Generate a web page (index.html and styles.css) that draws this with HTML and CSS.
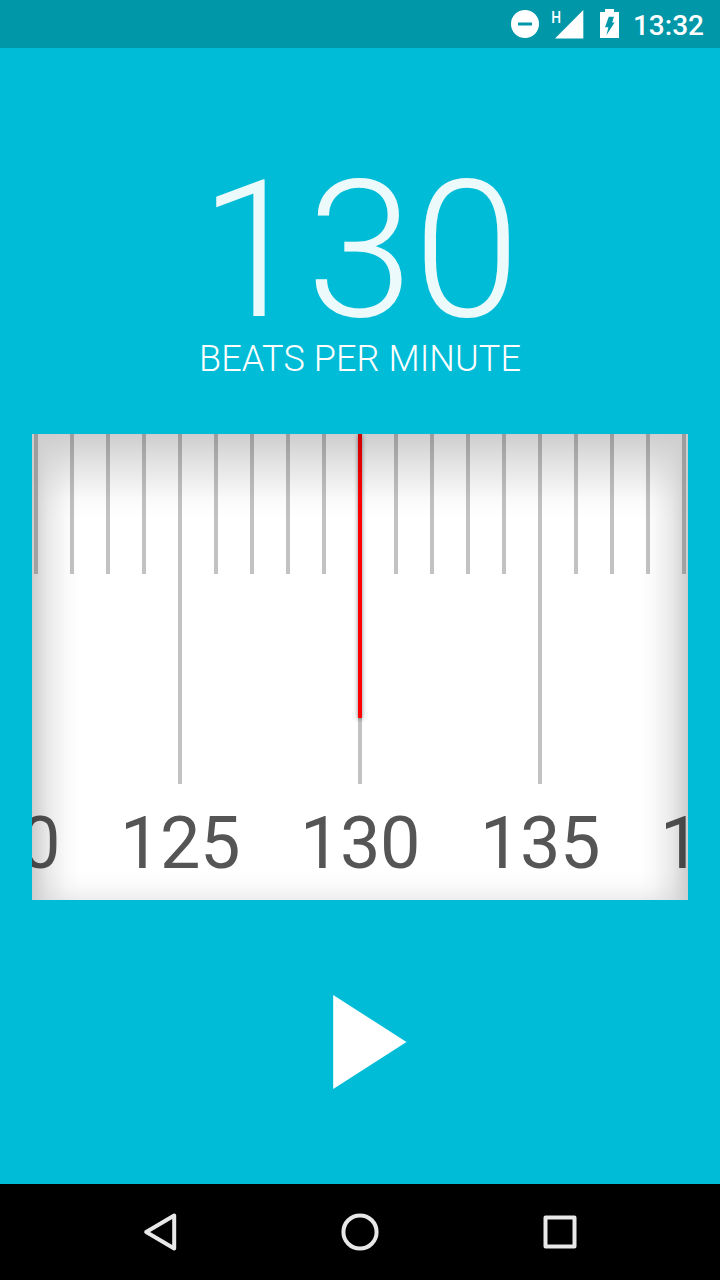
FILE: index.html
```html
<!DOCTYPE html>
<html lang="en">
<head>
    <meta charset="UTF-8">
    <meta name="viewport" content="width=device-width, initial-scale=1.0">
    <title>Metronome</title>
    <link rel="stylesheet" href="styles.css">
</head>
<body>
    <div class="screen">
        <header class="status-bar">
            <svg class="status-icons" width="112" height="48" viewBox="510 0 112 48">
                <path fill="#fff" fill-rule="evenodd" d="M525 10a14 14 0 1 0 0 28a14 14 0 1 0 0-28zM518 22.4h14v3.2h-14z"/>
                <text class="network" x="551.2" y="22.6" textLength="9.8" lengthAdjust="spacingAndGlyphs">H</text>
                <path fill="#fff" d="M583.3 10v28.5H555z"/>
                <path fill="#fff" fill-rule="evenodd" d="M605 9h9v3h5v26h-19V12h5zM608.8 16.8L605 27.2h3.4L606.4 35.2L614.6 22.6h-2.4l1.7-5.8z"/>
            </svg>
            <span class="clock">13:32</span>
        </header>

        <main class="metronome">
            <div class="bpm">130</div>
            <div class="bpm-label">BEATS PER MINUTE</div>

            <div class="dial">
                <div class="ticks">
                    <span class="tick"></span>
                    <span class="tick"></span>
                    <span class="tick"></span>
                    <span class="tick"></span>
                    <span class="tick long"></span>
                    <span class="tick"></span>
                    <span class="tick"></span>
                    <span class="tick"></span>
                    <span class="tick"></span>
                    <span class="tick long"></span>
                    <span class="tick"></span>
                    <span class="tick"></span>
                    <span class="tick"></span>
                    <span class="tick"></span>
                    <span class="tick long"></span>
                    <span class="tick"></span>
                    <span class="tick"></span>
                    <span class="tick"></span>
                    <span class="tick"></span>
                </div>
                <div class="numbers">
                    <span>120</span>
                    <span>125</span>
                    <span>130</span>
                    <span>135</span>
                    <span>140</span>
                </div>
                <div class="needle"></div>
                <div class="shade"></div>
            </div>

            <svg class="play" width="74" height="94" viewBox="0 0 74 94">
                <path fill="#fff" d="M0.2 0L73.5 47L0.2 94z"/>
            </svg>
        </main>

        <nav class="nav-bar">
            <svg width="40" height="40" viewBox="0 0 40 40">
                <path d="M34.2 3.6v32.8L6.2 20z"/>
            </svg>
            <svg width="40" height="40" viewBox="0 0 40 40">
                <circle cx="20" cy="20" r="16.6"/>
            </svg>
            <svg width="40" height="40" viewBox="0 0 40 40">
                <rect x="5.5" y="5.5" width="29" height="29"/>
            </svg>
        </nav>
    </div>
</body>
</html>
```

FILE: styles.css
```css
body { margin: 0; font-family: Roboto, sans-serif; background: #00bcd7; }
.screen { display: flex; flex-direction: column; width: 720px; height: 1280px; overflow: hidden; }

.status-bar { display: flex; justify-content: flex-end; align-items: center; height: 48px; padding-right: 16px; gap: 11px; background: #0097a9; color: #fff; }
.network { font-size: 17px; font-weight: 500; fill: #fff; }
.clock { font-size: 28px; font-weight: 500; line-height: 44px; padding-top: 4px; }

.metronome { flex: 1; display: flex; flex-direction: column; align-items: center; padding-top: 109px; color: #fff; }
.bpm { font-size: 192px; font-weight: 300; line-height: 187px; letter-spacing: 0.5px; color: rgba(255,255,255,0.93); }
.bpm-label { font-size: 36px; font-weight: 300; line-height: 30px; letter-spacing: 0.1px; }

.dial { position: relative; width: 656px; height: 466px; margin-top: 60px; background: #fff; overflow: hidden; }
.ticks { display: flex; gap: 32px; height: 350px; padding: 0 2px; }
.tick { width: 4px; height: 140px; background: #c2c2c2; }
.tick.long { height: 350px; }
.numbers { display: flex; justify-content: center; margin-top: 18px; color: #555; font-size: 72px; line-height: 84px; letter-spacing: -0.5px; }
.numbers span { flex: 0 0 180px; text-align: center; }
.needle { position: absolute; top: 0; left: 326px; width: 4px; height: 284px; background: #f00; box-shadow: 0 1px 4px rgba(0,0,0,0.5); }

/* inner shadow, opacity caps how dark the corners get */
.shade {
    position: absolute;
    inset: 0;
    opacity: 0.19;
    background:
        linear-gradient(to bottom, #000, rgba(0,0,0,0.52) 32px, rgba(0,0,0,0.08) 66px, transparent 84px),
        linear-gradient(to top, rgba(0,0,0,0.34), rgba(0,0,0,0.1) 14px, transparent 28px),
        linear-gradient(to right, #000, rgba(0,0,0,0.45) 16px, rgba(0,0,0,0.1) 34px, transparent 48px),
        linear-gradient(to left, #000, rgba(0,0,0,0.45) 16px, rgba(0,0,0,0.1) 34px, transparent 48px);
}

.play { margin: 95px 0 0 20px; }

.nav-bar { display: flex; justify-content: center; align-items: center; gap: 160px; height: 96px; background: #000; }
.nav-bar svg { fill: none; stroke: #e8e8e8; stroke-width: 4; stroke-linejoin: round; }
```
